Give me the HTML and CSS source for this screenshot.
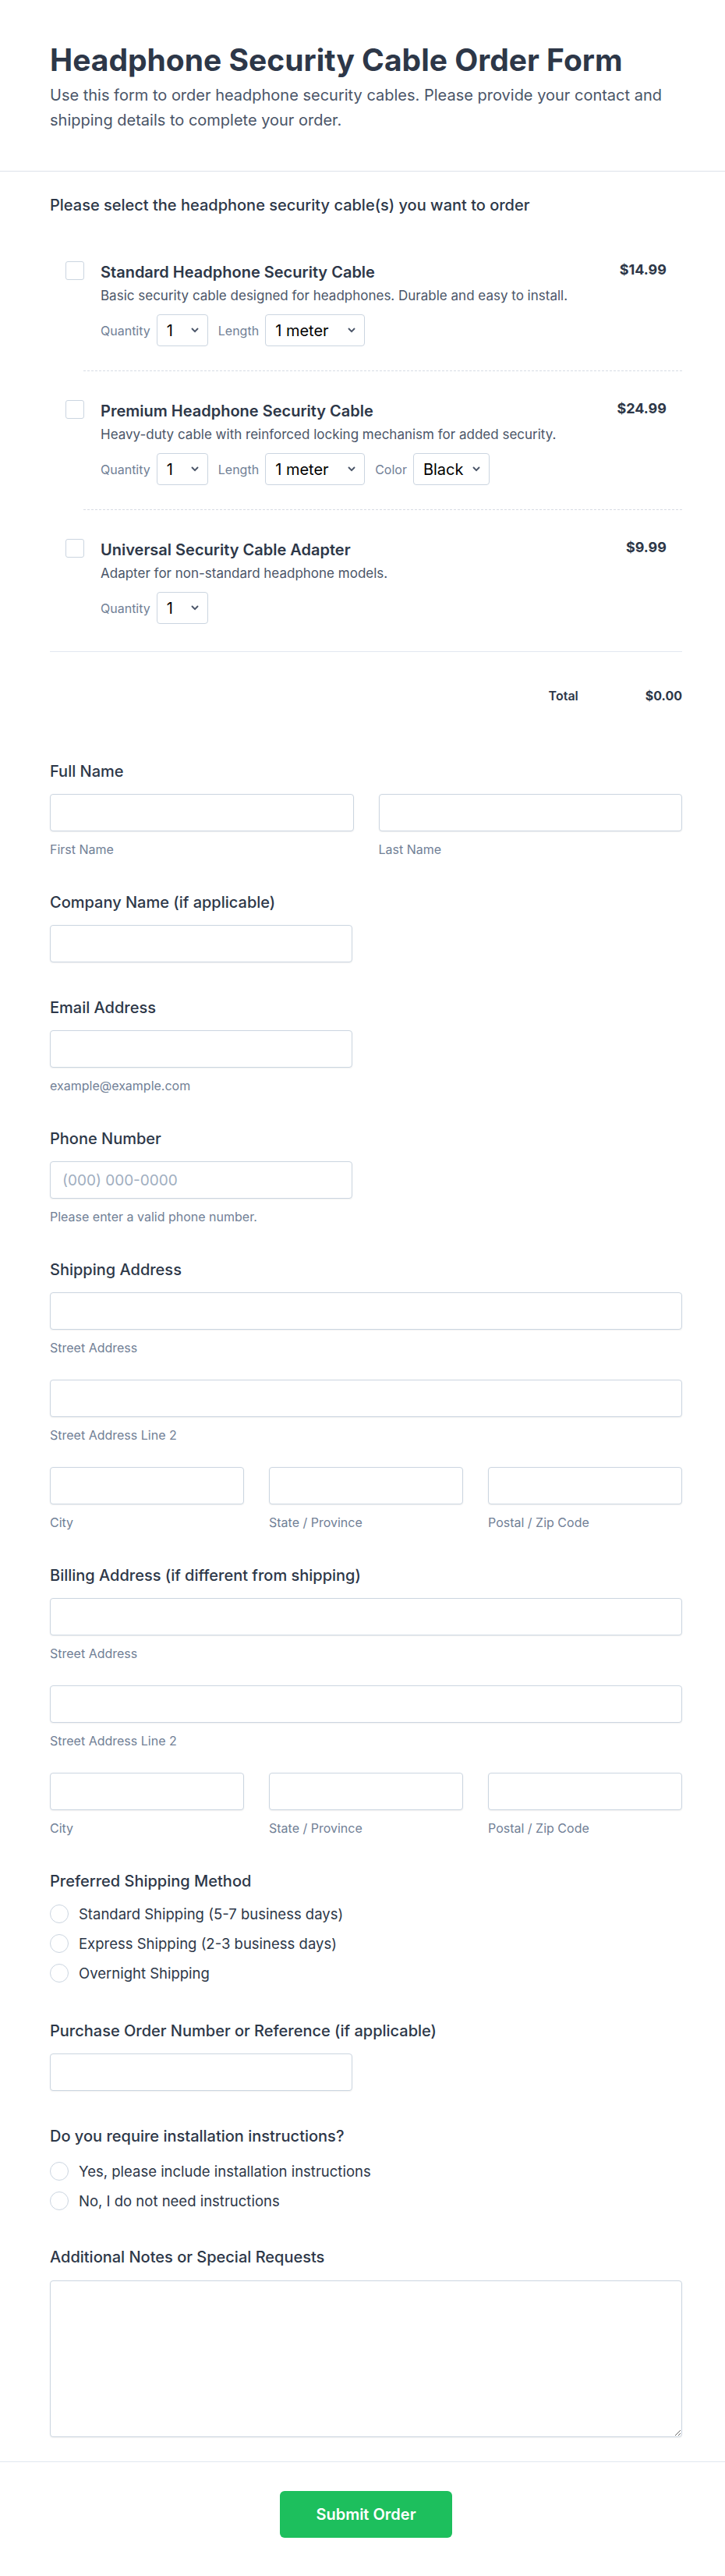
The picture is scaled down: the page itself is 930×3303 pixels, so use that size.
FILE: index.html
```html
<!DOCTYPE html>
<html lang="en">
<head>
<meta charset="utf-8">
<title>Headphone Security Cable Order Form</title>
<link rel="stylesheet" href="styles.css">
</head>
<body>
<div class="page">
  <header class="header">
    <h1 class="title">Headphone Security Cable Order Form</h1>
    <p class="intro">Use this form to order headphone security cables. Please provide your contact and shipping details to complete your order.</p>
  </header>

  <form class="form">
    <section class="products">
      <div class="label label-products">Please select the headphone security cable(s) you want to order</div>
      <div class="product-list">
        <div class="product">
          <input type="checkbox" class="check">
          <div class="product-body">
            <div class="product-name">Standard Headphone Security Cable</div>
            <p class="product-desc">Basic security cable designed for headphones. Durable and easy to install.</p>
            <div class="options">
              <label class="opt"><span>Quantity</span>
                <span class="sel-wrap"><select class="sel sel-qty"><option>1</option><option>2</option><option>3</option></select><svg class="chev" viewBox="0 0 10 7" width="10" height="7"><path d="M1.5 1.5 5 5.2 8.5 1.5" fill="none" stroke="#4a5568" stroke-width="1.9" stroke-linecap="round" stroke-linejoin="round"/></svg></span>
              </label>
              <label class="opt"><span>Length</span>
                <span class="sel-wrap"><select class="sel sel-len"><option>1 meter</option><option>2 meters</option><option>3 meters</option></select><svg class="chev" viewBox="0 0 10 7" width="10" height="7"><path d="M1.5 1.5 5 5.2 8.5 1.5" fill="none" stroke="#4a5568" stroke-width="1.9" stroke-linecap="round" stroke-linejoin="round"/></svg></span>
              </label>
            </div>
          </div>
          <div class="price">$14.99</div>
        </div>
        <div class="dash"></div>
        <div class="product">
          <input type="checkbox" class="check">
          <div class="product-body">
            <div class="product-name">Premium Headphone Security Cable</div>
            <p class="product-desc">Heavy-duty cable with reinforced locking mechanism for added security.</p>
            <div class="options">
              <label class="opt"><span>Quantity</span>
                <span class="sel-wrap"><select class="sel sel-qty"><option>1</option><option>2</option><option>3</option></select><svg class="chev" viewBox="0 0 10 7" width="10" height="7"><path d="M1.5 1.5 5 5.2 8.5 1.5" fill="none" stroke="#4a5568" stroke-width="1.9" stroke-linecap="round" stroke-linejoin="round"/></svg></span>
              </label>
              <label class="opt"><span>Length</span>
                <span class="sel-wrap"><select class="sel sel-len"><option>1 meter</option><option>2 meters</option><option>3 meters</option></select><svg class="chev" viewBox="0 0 10 7" width="10" height="7"><path d="M1.5 1.5 5 5.2 8.5 1.5" fill="none" stroke="#4a5568" stroke-width="1.9" stroke-linecap="round" stroke-linejoin="round"/></svg></span>
              </label>
              <label class="opt"><span>Color</span>
                <span class="sel-wrap"><select class="sel sel-color"><option>Black</option><option>White</option><option>Silver</option></select><svg class="chev" viewBox="0 0 10 7" width="10" height="7"><path d="M1.5 1.5 5 5.2 8.5 1.5" fill="none" stroke="#4a5568" stroke-width="1.9" stroke-linecap="round" stroke-linejoin="round"/></svg></span>
              </label>
            </div>
          </div>
          <div class="price">$24.99</div>
        </div>
        <div class="dash"></div>
        <div class="product">
          <input type="checkbox" class="check">
          <div class="product-body">
            <div class="product-name">Universal Security Cable Adapter</div>
            <p class="product-desc">Adapter for non-standard headphone models.</p>
            <div class="options">
              <label class="opt"><span>Quantity</span>
                <span class="sel-wrap"><select class="sel sel-qty"><option>1</option><option>2</option><option>3</option></select><svg class="chev" viewBox="0 0 10 7" width="10" height="7"><path d="M1.5 1.5 5 5.2 8.5 1.5" fill="none" stroke="#4a5568" stroke-width="1.9" stroke-linecap="round" stroke-linejoin="round"/></svg></span>
              </label>
            </div>
          </div>
          <div class="price">$9.99</div>
        </div>
      </div>
      <div class="total-row">
        <span class="total-label">Total</span>
        <span class="total-value">$0.00</span>
      </div>
    </section>

    <div class="field">
      <div class="label">Full Name</div>
      <div class="grid2">
        <div><input class="input" type="text"><div class="sub">First Name</div></div>
        <div><input class="input" type="text"><div class="sub">Last Name</div></div>
      </div>
    </div>

    <div class="field">
      <div class="label">Company Name (if applicable)</div>
      <input class="input half" type="text">
    </div>

    <div class="field">
      <div class="label">Email Address</div>
      <input class="input half" type="email">
      <div class="sub">example@example.com</div>
    </div>

    <div class="field">
      <div class="label">Phone Number</div>
      <input class="input half" type="tel" placeholder="(000) 000-0000">
      <div class="sub">Please enter a valid phone number.</div>
    </div>

    <div class="field">
      <div class="label">Shipping Address</div>
      <div class="addr">
        <div><input class="input" type="text"><div class="sub">Street Address</div></div>
        <div><input class="input" type="text"><div class="sub">Street Address Line 2</div></div>
        <div class="grid3">
          <div><input class="input" type="text"><div class="sub">City</div></div>
          <div><input class="input" type="text"><div class="sub">State / Province</div></div>
          <div><input class="input" type="text"><div class="sub">Postal / Zip Code</div></div>
        </div>
      </div>
    </div>

    <div class="field">
      <div class="label">Billing Address (if different from shipping)</div>
      <div class="addr">
        <div><input class="input" type="text"><div class="sub">Street Address</div></div>
        <div><input class="input" type="text"><div class="sub">Street Address Line 2</div></div>
        <div class="grid3">
          <div><input class="input" type="text"><div class="sub">City</div></div>
          <div><input class="input" type="text"><div class="sub">State / Province</div></div>
          <div><input class="input" type="text"><div class="sub">Postal / Zip Code</div></div>
        </div>
      </div>
    </div>

    <div class="field">
      <div class="label label-ship">Preferred Shipping Method</div>
      <div class="radios radios-ship">
        <label class="radio-row"><input type="radio" name="ship" class="radio"><span>Standard Shipping (5-7 business days)</span></label>
        <label class="radio-row"><input type="radio" name="ship" class="radio"><span>Express Shipping (2-3 business days)</span></label>
        <label class="radio-row"><input type="radio" name="ship" class="radio"><span>Overnight Shipping</span></label>
      </div>
    </div>

    <div class="field">
      <div class="label">Purchase Order Number or Reference (if applicable)</div>
      <input class="input half" type="text">
    </div>

    <div class="field">
      <div class="label label-inst">Do you require installation instructions?</div>
      <div class="radios radios-inst">
        <label class="radio-row"><input type="radio" name="inst" class="radio"><span>Yes, please include installation instructions</span></label>
        <label class="radio-row"><input type="radio" name="inst" class="radio"><span>No, I do not need instructions</span></label>
      </div>
    </div>

    <div class="field">
      <div class="label label-notes">Additional Notes or Special Requests</div>
      <textarea class="textarea"></textarea>
    </div>
  </form>

  <footer class="footer">
    <button type="button" class="submit">Submit Order</button>
  </footer>
</div>
</body>
</html>
```

FILE: styles.css
```css
* {
  box-sizing: border-box;
}

body {
  margin: 0;
  background: #ffffff;
  color: #000000;
  font-family: Inter, "Noto Sans", "Liberation Sans", sans-serif;
}

.header {
  padding: 55px 80px 49px 64px;
  border-bottom: 1px solid #dde2ea;
}

.title {
  margin: 0;
  font-size: 39px;
  line-height: 44px;
  font-weight: 700;
  color: #2d3748;
}

.intro {
  margin: 7px 0 0;
  font-size: 20px;
  line-height: 32px;
  color: #4a5568;
}

.form {
  padding: 29px 55px 31px 64px;
  display: flex;
  flex-direction: column;
  gap: 44px;
}

.label {
  font-size: 20px;
  line-height: 28px;
  font-weight: 500;
  color: #2d3748;
  margin-bottom: 15px;
}

.label-products {
  margin-bottom: 21px;
}

.label-ship {
  margin-bottom: 16px;
}

.label-inst {
  margin-bottom: 19px;
}

.label-notes {
  margin-bottom: 16px;
}

/* products */
.product {
  display: flex;
  align-items: flex-start;
  gap: 21px;
  padding: 37px 20px 31px;
}

.product:last-child {
  padding-bottom: 35px;
}

.dash {
  margin-left: 43px;
  border-top: 1px dashed #d7dce4;
}

.check {
  appearance: none;
  -webkit-appearance: none;
  margin: 0;
  flex: none;
  width: 24px;
  height: 24px;
  border: 1px solid #cbd5e0;
  border-radius: 3px;
  background: #ffffff;
}

.product-body {
  flex: 1;
  min-width: 0;
}

.product-name {
  font-size: 20px;
  line-height: 28px;
  font-weight: 600;
  color: #2d3748;
}

.product-desc {
  margin: 4px 0 0;
  font-size: 17px;
  line-height: 24px;
  color: #4a5568;
}

.options {
  margin-top: 12px;
  display: flex;
  align-items: center;
  gap: 13px;
}

.opt {
  display: flex;
  align-items: center;
  gap: 8px;
  font-size: 16px;
  line-height: 20px;
  color: #718096;
}

.sel-wrap {
  position: relative;
  display: block;
}

.sel {
  appearance: none;
  -webkit-appearance: none;
  display: block;
  height: 41px;
  margin: 0;
  padding: 0 0 0 12px;
  font-family: Inter, "Noto Sans", sans-serif;
  font-size: 20px;
  color: #000000;
  background: #ffffff;
  border: 1px solid #cbd5e0;
  border-radius: 4px;
}

.sel-qty {
  width: 66px;
}

.sel-len {
  width: 128px;
}

.sel-color {
  width: 98px;
}

.chev {
  position: absolute;
  right: 12px;
  top: 17px;
  pointer-events: none;
}

.price {
  flex: none;
  font-size: 18px;
  line-height: 22px;
  font-weight: 700;
  color: #2d3748;
}

.total-row {
  border-top: 1px solid #e2e8f0;
  padding: 44px 0 27px;
  display: flex;
  justify-content: flex-end;
  gap: 86px;
  font-size: 16px;
  line-height: 24px;
  color: #2d3748;
}

.total-label {
  font-weight: 600;
}

.total-value {
  font-weight: 700;
}

/* fields */
.input {
  display: block;
  width: 100%;
  height: 48px;
  margin: 0;
  padding: 0 15px;
  font-family: Inter, "Noto Sans", sans-serif;
  font-size: 19px;
  color: #2d3748;
  background: #ffffff;
  border: 1px solid #cbd5e0;
  border-radius: 4px;
  box-shadow: 0 1px 2px rgba(0, 0, 0, 0.06);
}

.input::placeholder {
  color: #a0aec0;
}

.half {
  width: 388px;
}

.grid2 {
  display: grid;
  grid-template-columns: 1fr 1fr;
  gap: 32px;
}

.grid3 {
  display: grid;
  grid-template-columns: 1fr 1fr 1fr;
  gap: 32px;
}

.addr {
  display: flex;
  flex-direction: column;
  gap: 31px;
}

.sub {
  margin-top: 13px;
  font-size: 16px;
  line-height: 20px;
  color: #718096;
}

.radios {
  display: flex;
  flex-direction: column;
  gap: 14px;
}

.radios-ship {
  padding-bottom: 4px;
}

.radios-inst {
  padding-bottom: 2px;
}

.radio-row {
  display: flex;
  align-items: center;
  gap: 13px;
  font-size: 18.5px;
  line-height: 24px;
  color: #2d3748;
}

.radio {
  appearance: none;
  -webkit-appearance: none;
  margin: 0;
  flex: none;
  width: 24px;
  height: 24px;
  border: 1px solid #cbd5e0;
  border-radius: 50%;
  background: #ffffff;
}

.textarea {
  display: block;
  width: 100%;
  height: 201px;
  margin: 0;
  padding: 12px 15px;
  font-family: Inter, "Noto Sans", sans-serif;
  font-size: 16px;
  border: 1px solid #cbd5e0;
  border-radius: 4px;
  box-shadow: 0 1px 2px rgba(0, 0, 0, 0.06);
  resize: vertical;
}

/* footer */
.footer {
  border-top: 1px solid #e2e8f0;
  padding: 37px 55px 47px 64px;
  display: flex;
  justify-content: center;
}

.submit {
  width: 221px;
  height: 60px;
  border: none;
  border-radius: 6px;
  background: #1dbf5d;
  color: #ffffff;
  font-family: Inter, "Noto Sans", sans-serif;
  font-size: 20px;
  font-weight: 600;
  line-height: 28px;
}
```
